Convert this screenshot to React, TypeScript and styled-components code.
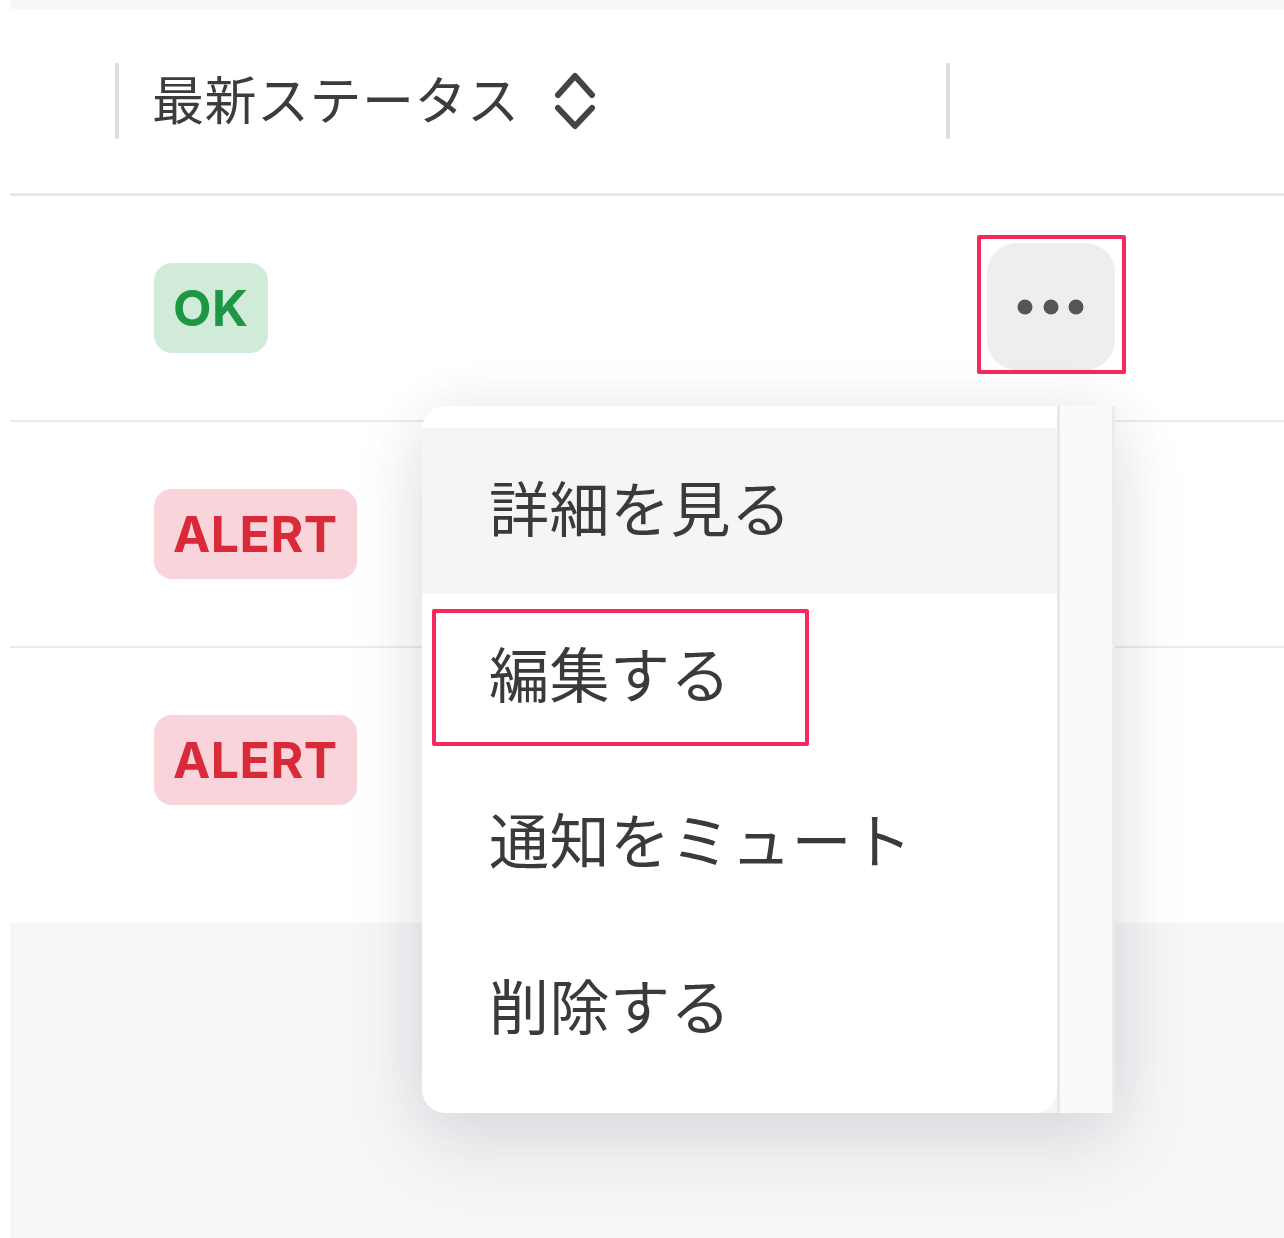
import React from 'react';
import styled, { createGlobalStyle } from 'styled-components';

const GlobalStyle = createGlobalStyle`
  html, body {
    margin: 0;
    padding: 0;
    background: #ffffff;
  }
  body {
    font-family: "Noto Sans CJK JP", "Noto Sans", sans-serif;
    color: #3a3a3a;
  }
`;

type Tone = 'ok' | 'alert';

interface Row {
  id: number;
  status: Tone;
  label: string;
  withAction?: boolean;
}

const rows: Row[] = [
  { id: 1, status: 'ok', label: 'OK', withAction: true },
  { id: 2, status: 'alert', label: 'ALERT' },
  { id: 3, status: 'alert', label: 'ALERT' },
];

const menuItems = ['詳細を見る', '編集する', '通知をミュート', '削除する'];

const SortIcon = () => (
  <svg width="44" height="60" viewBox="0 0 44 60" fill="none">
    <polyline
      points="5,24 22,5 39,24"
      stroke="#444"
      strokeWidth="6"
      strokeLinecap="round"
      strokeLinejoin="round"
    />
    <polyline
      points="5,37 22,55 39,37"
      stroke="#444"
      strokeWidth="6"
      strokeLinecap="round"
      strokeLinejoin="round"
    />
  </svg>
);

const DotsIcon = () => (
  <svg width="70" height="20" viewBox="0 0 70 20">
    <circle cx="9" cy="10" r="7.5" fill="#555" />
    <circle cx="35" cy="10" r="7.5" fill="#555" />
    <circle cx="60" cy="10" r="7.5" fill="#555" />
  </svg>
);

const App = () => {
  return (
    <>
      <GlobalStyle />
      <Page>
        <TopStrip />
        <Table>
          <HeaderRow>
            <LeadCell />
            <Divider />
            <HeaderLabel>
              <HeaderText>最新ステータス</HeaderText>
              <SortIcon />
            </HeaderLabel>
            <Divider />
          </HeaderRow>
          {rows.map((row, i) => (
            <BodyRow key={row.id} last={i === rows.length - 1}>
              <LeadCell />
              <StatusCell>
                <Badge tone={row.status}>{row.label}</Badge>
              </StatusCell>
              <ActionCell>
                {row.withAction && (
                  <KebabButton aria-label="メニュー">
                    <DotsIcon />
                  </KebabButton>
                )}
              </ActionCell>
            </BodyRow>
          ))}
        </Table>
        <Footer />

        <MenuLayer>
          <MenuPanel>
            {menuItems.map((item, i) => (
              <MenuItem key={item} active={i === 0}>
                <ItemText>{item}</ItemText>
                {i === 1 && <Annotation />}
              </MenuItem>
            ))}
          </MenuPanel>
          <ScrollTrack />
        </MenuLayer>
      </Page>
    </>
  );
};

const Page = styled.div`
  position: relative;
  width: 1284px;
  height: 1238px;
  padding-left: 10px;
  box-sizing: border-box;
  overflow: hidden;
  display: flex;
  flex-direction: column;
`;

const TopStrip = styled.div`
  height: 9px;
  background: #f8f8f8;
`;

const Table = styled.div`
  display: flex;
  flex-direction: column;
  background: #ffffff;
`;

const HeaderRow = styled.div`
  display: flex;
  align-items: center;
  height: 184px;
  border-bottom: 3px solid #e8e8e8;
`;

const LeadCell = styled.div`
  width: 105px;
  flex-shrink: 0;
`;

const Divider = styled.div`
  width: 4px;
  height: 76px;
  background: #dedede;
  border-radius: 1px;
  flex-shrink: 0;
`;

const HeaderLabel = styled.div`
  width: 827px;
  box-sizing: border-box;
  padding-left: 33px;
  display: flex;
  align-items: center;
  gap: 33px;
`;

const HeaderText = styled.span`
  margin-top: -8px;
  font-size: 52px;
  font-weight: 400;
  color: #3c3c3c;
  letter-spacing: 0.5px;
`;

const BodyRow = styled.div<{ last?: boolean }>`
  display: flex;
  align-items: flex-start;
  height: ${(p) => (p.last ? '275px' : '224px')};
  border-bottom: ${(p) => (p.last ? 'none' : '2px solid #ebebeb')};
`;

const StatusCell = styled.div`
  width: 831px;
  height: 224px;
  box-sizing: border-box;
  padding-left: 39px;
  display: flex;
  align-items: center;
  flex-shrink: 0;
`;

const Badge = styled.span<{ tone: Tone }>`
  display: inline-flex;
  align-items: center;
  height: 90px;
  padding: 0 19px;
  border-radius: 18px;
  font-family: Inter, "Noto Sans", sans-serif;
  font-weight: 700;
  font-size: 50px;
  letter-spacing: 0.5px;
  background: ${(p) => (p.tone === 'ok' ? '#d1ebd9' : '#f9d4da')};
  color: ${(p) => (p.tone === 'ok' ? '#1d9744' : '#d92a3a')};
`;

const ActionCell = styled.div`
  height: 224px;
  padding-left: 41px;
  display: flex;
  align-items: center;
`;

const KebabButton = styled.button`
  position: relative;
  width: 128px;
  height: 127px;
  margin-top: -3px;
  border: none;
  border-radius: 30px;
  background: #efeeed;
  display: flex;
  align-items: center;
  justify-content: center;
  padding: 0;
  cursor: pointer;

  &::after {
    content: '';
    position: absolute;
    inset: -8px -11px -4px -10px;
    border: 4px solid #f7285c;
    border-radius: 2px;
    pointer-events: none;
  }
`;

const Footer = styled.div`
  flex: 1;
  background: #f6f6f7;
`;

const MenuLayer = styled.div`
  position: absolute;
  left: 422px;
  top: 406px;
  display: flex;
  height: 707px;
  box-shadow: 0 30px 80px rgba(30, 30, 60, 0.11), 0 0 60px rgba(30, 30, 60, 0.06);
  border-radius: 24px 0 0 24px;
`;

const MenuPanel = styled.div`
  width: 635px;
  box-sizing: border-box;
  padding: 22px 0 21px;
  background: #ffffff;
  border-radius: 24px;
  display: flex;
  flex-direction: column;
`;

const MenuItem = styled.div<{ active?: boolean }>`
  position: relative;
  height: 166px;
  display: flex;
  align-items: center;
  padding-left: 67px;
  background: ${(p) => (p.active ? '#f6f5f4' : 'transparent')};
`;

const ItemText = styled.span`
  margin-top: -12px;
  font-size: 60px;
  font-weight: 400;
  color: #3a3a3a;
  letter-spacing: 0.5px;
`;

const Annotation = styled.span`
  position: absolute;
  left: 10px;
  top: 15px;
  width: 377px;
  height: 137px;
  box-sizing: border-box;
  border: 4px solid #f7285c;
  border-radius: 2px;
  pointer-events: none;
`;

const ScrollTrack = styled.div`
  width: 58px;
  box-sizing: border-box;
  background: #fafafa;
  border-left: 3px solid #e8e8e8;
  border-right: 3px solid #ececec;
`;

export default App;
